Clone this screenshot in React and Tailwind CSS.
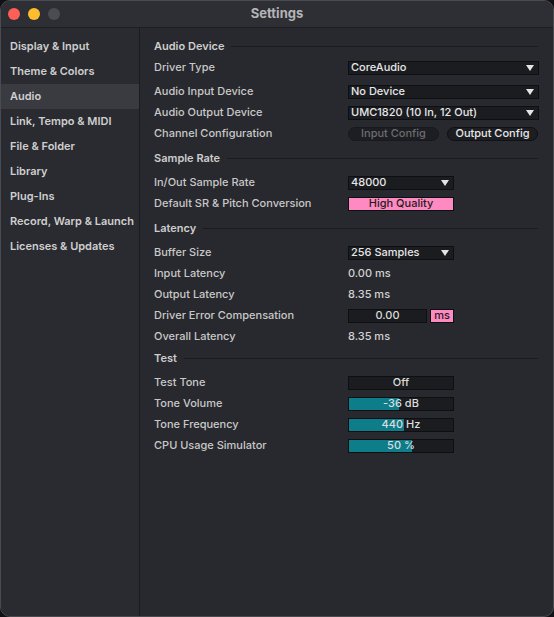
import { useState } from 'react';

const tabs = [
  'Display & Input',
  'Theme & Colors',
  'Audio',
  'Link, Tempo & MIDI',
  'File & Folder',
  'Library',
  'Plug-Ins',
  'Record, Warp & Launch',
  'Licenses & Updates',
];

const Arrow = () => (
  <svg width="8" height="6" viewBox="0 0 8 6" className="shrink-0">
    <path d="M0 0 L8 0 L4 6 Z" fill="#e4e4e4" />
  </svg>
);

const Dropdown = ({ value, wide }) => (
  <div
    className={`flex items-center justify-between h-[14px] pl-[2px] pr-[4px] bg-[#1b1c20] border border-[#0e0f11] text-[11px] text-[#e6e6e6] leading-none ${
      wide ? 'w-[191px]' : 'w-[106px]'
    }`}
  >
    <span>{value}</span>
    <Arrow />
  </div>
);

const Meter = ({ value, fill }) => (
  <div className="relative h-[14px] w-[106px] bg-[#1b1c20] border border-[#0e0f11] overflow-hidden">
    <div className="absolute inset-y-0 left-0 bg-[#0e7d8a]" style={{ width: `${fill}%` }} />
    <span className="absolute inset-0 flex items-center justify-center text-[11px] leading-none text-[#dcdcdc]">
      {value}
    </span>
  </div>
);

const Row = ({ label, children, className = '' }) => (
  <div className={`flex items-center h-[21px] ${className}`}>
    <span className="w-[194px] shrink-0">{label}</span>
    {children}
  </div>
);

const Section = ({ title, className = '' }) => (
  <div className={`flex items-center h-[21px] gap-[7px] pr-[15px] ${className}`}>
    <span className="text-[#cdcdcd] font-semibold">{title}</span>
    <div className="flex-1 h-px bg-[#1b1c1f]" />
  </div>
);

const Value = ({ children }) => <span className="text-[#d2d2d2]">{children}</span>;

export default function App() {
  const [active, setActive] = useState('Audio');

  return (
    <div
      className="w-[554px] h-[617px] bg-[#111113]"
      style={{ fontFamily: 'Inter, "Noto Sans", sans-serif' }}
    >
      <div className="flex flex-col w-full h-full rounded-[10px] overflow-hidden border border-[#4a4b50] bg-[#28292e]">
        {/* Title bar */}
        <div className="relative flex items-center h-[27px] shrink-0 bg-[#2e2f34] border-b border-[#1d1e21]">
          <div className="flex items-center gap-[8px] pl-[7px]">
            <span className="w-[12px] h-[12px] rounded-full bg-[#fe5f57]" />
            <span className="w-[12px] h-[12px] rounded-full bg-[#febc2e]" />
            <span className="w-[12px] h-[12px] rounded-full bg-[#4b4c51]" />
          </div>
          <span className="absolute inset-0 flex items-center justify-center text-[13px] font-bold text-[#b4b4b6]">
            Settings
          </span>
        </div>

        <div className="flex flex-1 min-h-0">
          {/* Sidebar */}
          <nav className="w-[139px] shrink-0 pt-[6px] bg-[#2a2b30] border-r border-[#1b1c1f]">
            {tabs.map((t) => (
              <button
                key={t}
                onClick={() => setActive(t)}
                className={`flex items-center w-full h-[25px] pl-[9px] text-left text-[11px] font-semibold text-[#cfcfcf] ${
                  active === t ? 'bg-[#3a3b40]' : ''
                }`}
              >
                {t}
              </button>
            ))}
          </nav>

          {/* Audio preferences */}
          <main className="flex-1 pl-[14px] pt-[8px] text-[11px] font-medium text-[#c8c8c8]">
            <Section title="Audio Device" />
            <Row label="Driver Type">
              <Dropdown value="CoreAudio" wide />
            </Row>
            <Row label="Audio Input Device" className="mt-[3px]">
              <Dropdown value="No Device" wide />
            </Row>
            <Row label="Audio Output Device">
              <Dropdown value="UMC1820 (10 In, 12 Out)" wide />
            </Row>
            <Row label="Channel Configuration">
              <div className="flex gap-[8px]">
                <button className="w-[91px] h-[14px] rounded-full bg-[#1d1e22] border border-[#18191c] text-[11px] leading-none text-[#6b6c70]">
                  Input Config
                </button>
                <button className="w-[91px] h-[14px] rounded-full bg-[#1d1e22] border border-[#101113] text-[11px] leading-none text-[#e8e8e8]">
                  Output Config
                </button>
              </div>
            </Row>

            <Section title="Sample Rate" className="mt-[4px]" />
            <Row label="In/Out Sample Rate" className="mt-[3px]">
              <Dropdown value="48000" />
            </Row>
            <Row label="Default SR & Pitch Conversion">
              <div className="flex items-center justify-center w-[106px] h-[14px] bg-[#ff8ac1] border border-[#0e0f11] text-[11px] leading-none text-[#1d1d20]">
                High Quality
              </div>
            </Row>

            <Section title="Latency" className="mt-[4px]" />
            <Row label="Buffer Size" className="mt-[3px]">
              <Dropdown value="256 Samples" />
            </Row>
            <Row label="Input Latency">
              <Value>0.00 ms</Value>
            </Row>
            <Row label="Output Latency">
              <Value>8.35 ms</Value>
            </Row>
            <Row label="Driver Error Compensation">
              <div className="flex gap-[3px]">
                <div className="flex items-center justify-center w-[79px] h-[14px] bg-[#1b1c20] border border-[#0e0f11] text-[11px] leading-none text-[#dcdcdc]">
                  0.00
                </div>
                <div className="flex items-center justify-center w-[24px] h-[14px] bg-[#ff8ac1] border border-[#0e0f11] text-[11px] leading-none text-[#1d1d20]">
                  ms
                </div>
              </div>
            </Row>
            <Row label="Overall Latency">
              <Value>8.35 ms</Value>
            </Row>

            <Section title="Test" className="mt-[1px]" />
            <Row label="Test Tone" className="mt-[3px]">
              <div className="flex items-center justify-center w-[106px] h-[14px] bg-[#1b1c20] border border-[#0e0f11] text-[11px] leading-none text-[#dcdcdc]">
                Off
              </div>
            </Row>
            <Row label="Tone Volume">
              <Meter value="-36 dB" fill={48} />
            </Row>
            <Row label="Tone Frequency">
              <Meter value="440 Hz" fill={53} />
            </Row>
            <Row label="CPU Usage Simulator">
              <Meter value="50 %" fill={61} />
            </Row>
          </main>
        </div>
      </div>
    </div>
  );
}
